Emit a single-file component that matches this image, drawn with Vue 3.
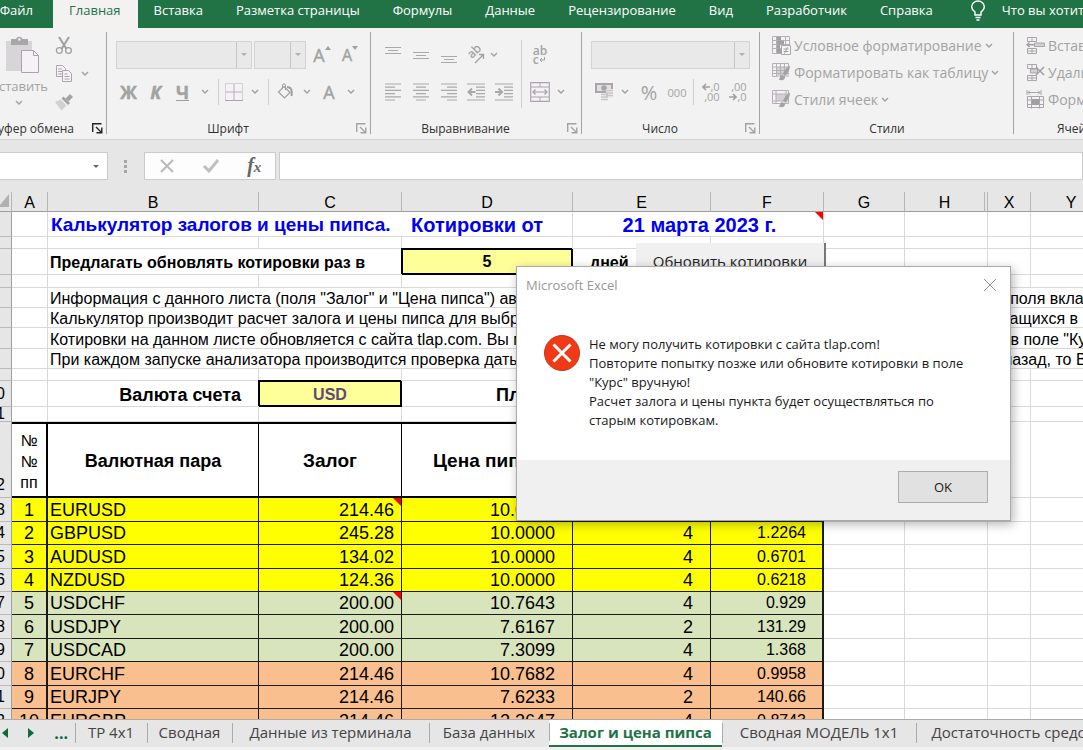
<script setup>
import { ref } from 'vue'

const ribbonTabs = ['Файл', 'Главная', 'Вставка', 'Разметка страницы', 'Формулы', 'Данные', 'Рецензирование', 'Вид', 'Разработчик', 'Справка']
const activeRibbonTab = ref('Главная')

const columns = [
  { name: 'A', width: 36 },
  { name: 'B', width: 211 },
  { name: 'C', width: 143 },
  { name: 'D', width: 171 },
  { name: 'E', width: 138 },
  { name: 'F', width: 113 },
  { name: 'G', width: 81 },
  { name: 'H', width: 80 },
  { name: '', width: 3 },
  { name: 'X', width: 43 },
  { name: 'Y', width: 81 }
]

const notes = [
  { height: 20, start: 'Информация с данного листа (поля "Залог" и "Цена пипса") автоматически', end: 'ет поля вкладки' },
  { height: 20, start: 'Калькулятор производит расчет залога и цены пипса для выбранных', end: 'ржащихся в поле' },
  { height: 21, start: 'Котировки на данном листе обновляется с сайта tlap.com. Вы можете', end: 'те в поле "Курс"' },
  { height: 20, start: 'При каждом запуске анализатора производится проверка даты обновления', end: 'й назад, то Вам' }
]

const pairs = [
  { row: 13, n: 1, pair: 'EURUSD', margin: '214.46', pip: '10.0000', digits: 4, rate: '1.0723', tone: 'yellow', height: 24, mark: true },
  { row: 14, n: 2, pair: 'GBPUSD', margin: '245.28', pip: '10.0000', digits: 4, rate: '1.2264', tone: 'yellow', height: 23 },
  { row: 15, n: 3, pair: 'AUDUSD', margin: '134.02', pip: '10.0000', digits: 4, rate: '0.6701', tone: 'yellow', height: 24 },
  { row: 16, n: 4, pair: 'NZDUSD', margin: '124.36', pip: '10.0000', digits: 4, rate: '0.6218', tone: 'yellow', height: 23 },
  { row: 17, n: 5, pair: 'USDCHF', margin: '200.00', pip: '10.7643', digits: 4, rate: '0.929', tone: 'green', height: 23, mark: true },
  { row: 18, n: 6, pair: 'USDJPY', margin: '200.00', pip: '7.6167', digits: 2, rate: '131.29', tone: 'green', height: 24 },
  { row: 19, n: 7, pair: 'USDCAD', margin: '200.00', pip: '7.3099', digits: 4, rate: '1.368', tone: 'green', height: 23 },
  { row: 20, n: 8, pair: 'EURCHF', margin: '214.46', pip: '10.7682', digits: 4, rate: '0.9958', tone: 'orange', height: 24 },
  { row: 21, n: 9, pair: 'EURJPY', margin: '214.46', pip: '7.6233', digits: 2, rate: '140.66', tone: 'orange', height: 23 },
  { row: 22, n: 10, pair: 'EURGBP', margin: '214.46', pip: '12.2647', digits: 4, rate: '0.8743', tone: 'orange', height: 24 }
]

const sheets = [
  { name: 'ТР 4х1', width: 72 },
  { name: 'Сводная', width: 85 },
  { name: 'Данные из терминала', width: 197 },
  { name: 'База данных', width: 120 },
  { name: 'Залог и цена пипса', width: 173 },
  { name: 'Сводная МОДЕЛЬ 1х1', width: 194 },
  { name: 'Достаточность средств', width: 200 }
]
const activeSheet = ref('Залог и цена пипса')
const period = ref('5')
</script>

<template>
  <div class="excel">
    <svg class="sprite" aria-hidden="true">
      <symbol id="chev" viewBox="0 0 8 6"><path d="M1 1l3 3 3-3" fill="none" stroke="#a0a0a0" stroke-width="1.4" /></symbol>
      <symbol id="launch" viewBox="0 0 11 11"><path d="M.7 9V.7H9.5M4 4l5 5M9.8 4.500v5.300H4.500" fill="none" stroke="currentColor" stroke-width="1.400" /></symbol>
      <symbol id="brush" viewBox="0 0 12 16"><path d="M11.500 0C8 2 5.500 5 4.500 8.500l2 1.500C9.500 8 11.500 4 11.500 0z" fill="#a3a3a3" /><path d="M3.800 9.500C1.500 10 2 12.500 0 14c3 1.500 6.500 1 6.500-2.500z" fill="#a3a3a3" /></symbol>
    </svg>

    <nav class="tabs" aria-label="Лента">
      <button v-for="t in ribbonTabs" :key="t" class="tab" :class="{ active: t === activeRibbonTab, file: t === 'Файл' }" @click="activeRibbonTab = t"><span>{{ t }}</span></button>
      <button class="tab tell">
        <svg width="16" height="22" viewBox="0 0 16 22" fill="none" stroke="#fff" stroke-width="1.4"><path d="M5 15v-3C3 10.500 1.700 9 1.700 6.700 1.700 3.500 4.500 1 8 1s6.300 2.500 6.300 5.700C14.300 9 13 10.500 11 12v3zM5.500 17.500h5M6.500 20h3" /></svg>
        <span>Что вы хотите сделать?</span>
      </button>
    </nav>

    <div class="ribbon">
      <section class="group clipboard">
        <div class="clip-body">
          <button class="paste">
            <svg width="34" height="38" viewBox="0 0 34 38"><path d="M0 5h26v30H0z" fill="#d8d5d8" /><path d="M5 3h5a3.500 3.500 0 0 1 6.500 0H22v6H5z" fill="#a9a6a9" /><circle cx="13.300" cy="3.500" r="1.300" fill="#f1f1f1" /><path d="M15.500 14.500h12l5 5v17h-17z" fill="#f5f1f7" stroke="#a9a6a9" /><path d="M27.500 14.500v5h5" fill="none" stroke="#a9a6a9" /></svg>
            <span class="paste-label"><span>Вставить</span></span>
            <svg class="chev"><use href="#chev" /></svg>
          </button>
          <div class="clip-tools">
            <button aria-label="Вырезать"><svg width="18" height="19" viewBox="0 0 18 19" fill="none" stroke="#a0a0a0"><path d="M4 1l7.500 12M14 1L6.500 13" stroke-width="2" /><circle cx="4.300" cy="14.500" r="2.900" stroke-width="1.300" /><circle cx="13.500" cy="14.500" r="2.900" stroke-width="1.300" /></svg></button>
            <button aria-label="Копировать"><svg width="18" height="19" viewBox="0 0 18 19" fill="#f5f1f7" stroke="#a9a6a9"><path d="M1.500 1.500h6l3 3v8h-9z" /><path d="M3 5h4M3 7.500h5M3 10h4" /><path d="M7.500 6.500h6l3 3v8h-9z" /><path d="M9.500 10h3M9.500 12.500h5M9.500 15h5" /></svg></button>
            <svg class="chev"><use href="#chev" /></svg>
            <button aria-label="Формат по образцу"><svg width="18" height="18" viewBox="0 0 18 18"><path d="M15 1l3 3-4.500 4.500-3-3z" fill="#a3a3a3" /><path d="M8.500 3.500l6.500 6.500-2 2L6.500 5.500z" fill="#a3a3a3" /><path d="M5.500 6.500l6 6-5 5L0 9z" fill="#d3d0d3" /></svg></button>
          </div>
        </div>
        <footer class="caption"><span>Буфер обмена</span><button class="launch dark" aria-label="Параметры буфера обмена"><svg width="11" height="11"><use href="#launch" /></svg></button></footer>
      </section>

      <section class="group font">
        <div class="font-top">
          <span class="combo"><select aria-label="Шрифт" disabled></select><i></i></span>
          <span class="combo"><select aria-label="Размер шрифта" disabled></select><i></i></span>
          <button class="glyph" aria-label="Увеличить размер шрифта">A<svg width="6" height="4" viewBox="0 0 6 4"><path d="M0 4l3-4 3 4z" fill="#a0a0a0" /></svg></button>
          <button class="glyph small" aria-label="Уменьшить размер шрифта">A<svg width="6" height="4" viewBox="0 0 6 4"><path d="M0 0l3 4 3-4z" fill="#a0a0a0" /></svg></button>
        </div>
        <div class="font-bottom">
          <button class="glyph bold">Ж</button>
          <button class="glyph bold italic">К</button>
          <button class="glyph bold underline">Ч</button>
          <svg class="chev"><use href="#chev" /></svg>
          <i class="rule"></i>
          <button aria-label="Границы"><svg width="18" height="18" viewBox="0 0 18 18" fill="none"><path d="M.5.5h17v17H.5z" fill="#f5f1f7" stroke="#b5b0b5" stroke-dasharray="1 1" /><path d="M9 1v16M1 9h16" stroke="#b5b0b5" /><path d="M0 17.500h18" stroke="#a9a6a9" /></svg></button>
          <svg class="chev"><use href="#chev" /></svg>
          <i class="rule"></i>
          <button aria-label="Цвет заливки"><svg width="18" height="18" viewBox="0 0 18 18" fill="none" stroke="#a0a0a0"><path d="M7 3.500l6 6-5.500 5.500-6-6z" fill="#f5f1f7" stroke-width="1.200" /><path d="M5.500 5V2c0-1.500 3-1.500 3 0v5" /><path d="M10 4c4 0 5.500 3 4.500 9" stroke-width="2" /></svg></button>
          <svg class="chev"><use href="#chev" /></svg>
          <button class="glyph" aria-label="Цвет шрифта">A</button>
          <svg class="chev"><use href="#chev" /></svg>
        </div>
        <footer class="caption"><span>Шрифт</span><button class="launch" aria-label="Параметры шрифта"><svg width="11" height="11"><use href="#launch" /></svg></button></footer>
      </section>

      <section class="group align">
        <div class="align-body">
          <button aria-label="По верхнему краю"><svg class="lines" viewBox="0 0 18 18"><path d="M1 1.500h16M4 4.500h10M1 7.500h16" /></svg></button>
          <button aria-label="По середине"><svg class="lines" viewBox="0 0 18 18"><path d="M1 6.500h16M4 9.500h10M1 12.500h16" /></svg></button>
          <button aria-label="По нижнему краю"><svg class="lines" viewBox="0 0 18 18"><path d="M1 10.500h16M4 13.500h10M1 16.500h16" /></svg></button>
          <button aria-label="Ориентация"><svg width="18" height="18" viewBox="0 0 18 18"><text x="0" y="0" transform="translate(5 13) rotate(-45)" font-size="12" fill="#a0a0a0" stroke="#a0a0a0" stroke-width=".3">ab</text><path d="M8 17l8-8M12 8.500h4.500V13" fill="none" stroke="#a0a0a0" stroke-width="1.300" /></svg></button>
          <svg class="chev start"><use href="#chev" /></svg>
          <i class="rule tall"></i>
          <button aria-label="Перенести текст" class="wrap"><span>ab</span><span>c<svg width="6" height="6" viewBox="0 0 6 6" fill="none" stroke="#a0a0a0"><path d="M5.500 0v3H1M3 1L1 3l2 2" /></svg></span></button>
          <span></span>
          <button aria-label="По левому краю"><svg class="lines" viewBox="0 0 18 18"><path d="M1 1h16M1 4.200h10M1 7.400h16M1 10.600h10M1 13.800h16M1 17h10" /></svg></button>
          <button aria-label="По центру"><svg class="lines" viewBox="0 0 18 18"><path d="M1 1h16M4 4.200h10M1 7.400h16M4 10.600h10M1 13.800h16M4 17h10" /></svg></button>
          <button aria-label="По правому краю"><svg class="lines" viewBox="0 0 18 18"><path d="M1 1h16M7 4.200h10M1 7.400h16M7 10.600h10M1 13.800h16M7 17h10" /></svg></button>
          <button aria-label="Уменьшить отступ"><svg class="lines" viewBox="0 0 18 18"><path d="M0 1h18M9 4.200h9M9 7.400h9M9 10.600h9M9 13.800h9M0 17h18" /><path d="M8.500 9H1.500M5 5.500L1.500 9 5 12.500" stroke-width="2" /></svg></button>
          <button aria-label="Увеличить отступ"><svg class="lines" viewBox="0 0 18 18"><path d="M0 1h18M9 4.200h9M9 7.400h9M9 10.600h9M9 13.800h9M0 17h18" /><path d="M0 9h6.500M3.500 5.500L7 9l-3.500 3.500" stroke-width="2" /></svg></button>
          <button aria-label="Объединить ячейки"><svg width="20" height="20" viewBox="0 0 20 20" fill="none" stroke="#a9a6a9"><path d="M.7.7h18.600v18.600H.7z" fill="#f5f1f7" stroke-width="1.200" /><path d="M1 5h18M1 15h18M10 1v4M10 15v4" /><path d="M3 10h14M5.500 7.500L3 10l2.500 2.500M14.500 7.500L17 10l-2.500 2.500" stroke="#a0a0a0" stroke-width="1.200" /></svg></button>
          <svg class="chev"><use href="#chev" /></svg>
        </div>
        <footer class="caption"><span>Выравнивание</span><button class="launch" aria-label="Параметры выравнивания"><svg width="11" height="11"><use href="#launch" /></svg></button></footer>
      </section>

      <section class="group number">
        <div class="number-top"><span class="combo"><select aria-label="Числовой формат" disabled></select><i></i></span></div>
        <div class="number-bottom">
          <button aria-label="Финансовый формат"><svg width="20" height="20" viewBox="0 0 20 20"><path d="M1 1h18v10H1z" fill="#a9a6a9" /><path d="M3 3h14v6H3z" fill="#e2dfe2" /><circle cx="10" cy="6" r="2.800" fill="#a9a6a9" /><path d="M12 7h7v9h-7z" fill="#ece8ee" /><path d="M12 8.500h7M12 11h7M12 13.500h7M7 12.500h7M7 15h7M7 17.500h7" stroke="#c9c5c9" stroke-width="1.300" /></svg></button>
          <svg class="chev"><use href="#chev" /></svg>
          <button class="percent">%</button>
          <button class="zeros">000</button>
          <i class="rule"></i>
          <button class="decimals" aria-label="Увеличить разрядность"><span><svg width="8" height="8" viewBox="0 0 8 8"><path d="M8 4H1.500M4 1L1 4l3 3" /></svg>,0</span><span>,00</span></button>
          <button class="decimals" aria-label="Уменьшить разрядность"><span>,00</span><span><svg width="8" height="8" viewBox="0 0 8 8"><path d="M0 4h6.500M4 1l3 3-3 3" /></svg>,0</span></button>
        </div>
        <footer class="caption"><span>Число</span><button class="launch" aria-label="Параметры числа"><svg width="11" height="11"><use href="#launch" /></svg></button></footer>
      </section>

      <section class="group styles">
        <div class="list">
          <button><svg width="19" height="19" viewBox="0 0 19 19"><path d="M.5.500h17v17H.5z" fill="#f5f1f7" stroke="#b5b0b5" /><path d="M1 4.500h16M1 8.500h16M1 12.500h16M4.500 1v16M13.500 1v16" stroke="#b5b0b5" /><path d="M5 1h4v3.500H5zM5 5h7v3.500H5zM5 9h3v3.500H5zM5 13h4v4H5z" fill="#a3a0a3" /><path d="M9.500 9.500h9v9h-9z" fill="#f8f5f9" stroke="#a9a6a9" /><path d="M11.500 13h5M11.500 15.500h5M15.500 11l-3 6.500" stroke="#a0a0a0" /></svg>Условное форматирование<svg class="chev"><use href="#chev" /></svg></button>
          <button><svg width="19" height="19" viewBox="0 0 19 19"><path d="M.5.500h16v13H.5z" fill="#f5f1f7" stroke="#b5b0b5" /><path d="M5 4h12v10H5z" fill="#d3d0d3" /><path d="M1 4h16M1 7.500h16M1 10.500h16M4.500 1v13M8.500 1v13M12.500 1v13" stroke="#b5b0b5" /><use href="#brush" x="6" y="2.500" width="13" height="16" /></svg>Форматировать как таблицу<svg class="chev"><use href="#chev" /></svg></button>
          <button><svg width="19" height="19" viewBox="0 0 19 19"><path d="M.5.500h16v13H.5z" fill="#f5f1f7" stroke="#b5b0b5" /><path d="M4 4h10v7H4z" fill="#d3d0d3" /><path d="M1 4h16M1 11h16M4 1v13M14 1v13" stroke="#b5b0b5" /><use href="#brush" x="6" y="2.500" width="13" height="16" /></svg>Стили ячеек<svg class="chev"><use href="#chev" /></svg></button>
        </div>
        <footer class="caption"><span>Стили</span></footer>
      </section>

      <section class="group cells">
        <div class="list">
          <button><svg width="19" height="19" viewBox="0 0 19 19" fill="#f5f1f7" stroke="#a9a6a9"><path d="M1.500 1.500h9v4h-9zM6 1.500v4M1.500 12.500h9v5h-9zM6 12.500v5M1.500 15h9" /><path d="M8.500 7h10v3.500h-10z" fill="#d3d0d3" /><path d="M8 8.700H1M3.500 6.500L1 8.700 3.500 11" fill="none" stroke="#a0a0a0" stroke-width="1.400" /></svg>Вставить</button>
          <button><svg width="19" height="19" viewBox="0 0 19 19" fill="#f5f1f7" stroke="#a9a6a9"><path d="M1.500 1.500h9v4h-9zM6 1.500v4M1.500 12.500h9v5h-9zM6 12.500v5M1.500 15h9" /><path d="M4.500 6h7v4h-7z" fill="#d3d0d3" /><path d="M10 4l8 8M18 4l-8 8" stroke="#a0a0a0" stroke-width="1.500" /></svg>Удалить</button>
          <button><svg width="19" height="19" viewBox="0 0 19 19" fill="#f5f1f7" stroke="#a9a6a9"><path d="M1 0v5M15 0v5M2 2.500h12M4 .500l-2 2 2 2M12 .500l2 2-2 2" /><path d="M1.500 6.500h16v11h-16zM5.500 6.500v12M13.500 6.500v12M1.500 10h16M1.500 14.500h16" /><path d="M6 9h7v6H6z" fill="#a0a0a0" stroke="none" /></svg>Формат</button>
        </div>
        <footer class="caption"><span>Ячейки</span></footer>
      </section>
    </div>

    <div class="formula-bar">
      <span class="name-box"><input type="text" aria-label="Имя ячейки" /><i></i></span>
      <svg class="dots" width="3" height="13" viewBox="0 0 3 13" fill="#a6a6a6"><path d="M0 0h3v3H0zM0 5h3v3H0zM0 10h3v3H0z" /></svg>
      <div class="formula-tools">
        <button aria-label="Отмена"><svg width="16" height="14" viewBox="0 0 16 14" fill="none" stroke="#b9b9b9" stroke-width="2"><path d="M2 1l12 12M14 1L2 13" /></svg></button>
        <button aria-label="Ввод"><svg width="18" height="14" viewBox="0 0 18 14" fill="none" stroke="#c0c0c0" stroke-width="3"><path d="M2 7l5 5L16 1" /></svg></button>
        <button class="fx" aria-label="Вставить функцию">f<small>x</small></button>
      </div>
      <input class="formula" type="text" aria-label="Строка формул" />
    </div>

    <main class="sheet">
      <table>
        <colgroup><col class="rowhead-col" /><col v-for="c in columns" :key="c.name" :style="{ width: c.width + 'px' }" /><col /></colgroup>
        <thead>
          <tr>
            <th class="corner"><svg width="9" height="13" viewBox="0 0 9 13"><path d="M9 0v13H0V11z" fill="#b1b1b1" /></svg></th>
            <th v-for="c in columns" :key="c.name" scope="col">{{ c.name }}</th>
            <th></th>
          </tr>
        </thead>
        <tbody>
          <tr class="r25">
            <th></th><td></td>
            <td colspan="2" class="title open">Калькулятор залогов и цены пипса.</td>
            <td class="title quotes">Котировки от</td>
            <td colspan="2" class="title date marked">21 марта 2023 г.</td>
            <td v-for="i in 6" :key="i"></td>
          </tr>
          <tr class="r12"><th></th><td v-for="i in 12" :key="i"></td></tr>
          <tr class="r26">
            <th></th><td></td>
            <td colspan="2" class="strong open"><label for="period">Предлагать обновлять котировки раз в</label></td>
            <td class="entry"><input id="period" v-model="period" type="text" /></td>
            <td class="strong days open">дней</td><td></td>
            <td v-for="i in 6" :key="i"></td>
          </tr>
          <tr class="r13"><th></th><td v-for="i in 12" :key="i"></td></tr>
          <tr v-for="n in notes" :key="n.start" :style="{ height: n.height + 'px' }">
            <th></th><td></td>
            <td colspan="8" class="note open">{{ n.start }}</td>
            <td colspan="3" class="note open">{{ n.end }}</td>
          </tr>
          <tr class="r12"><th></th><td v-for="i in 12" :key="i"></td></tr>
          <tr class="r26">
            <th><span class="num">10</span></th><td></td>
            <td class="account">Валюта счета</td>
            <td class="entry currency">USD</td>
            <td class="leverage open">Плечо</td><td></td><td></td>
            <td v-for="i in 6" :key="i"></td>
          </tr>
          <tr class="r15"><th><span class="num">11</span></th><td v-for="i in 12" :key="i"></td></tr>
          <tr class="head">
            <th class="low"><span class="num">12</span></th>
            <td class="n">№<br />№<br />пп</td><td class="pair-head">Валютная пара</td><td>Залог</td><td>Цена пипса</td><td>Знаков</td><td class="last">Курс</td>
            <td v-for="i in 6" :key="i" class="plain"></td>
          </tr>
          <tr v-for="p in pairs" :key="p.row" class="data" :class="p.tone" :style="{ height: p.height + 'px' }">
            <th><span class="num">{{ p.row }}</span></th>
            <td class="n">{{ p.n }}</td><td class="pair">{{ p.pair }}</td><td class="margin" :class="{ marked: p.mark }">{{ p.margin }}</td><td>{{ p.pip }}</td><td>{{ p.digits }}</td><td class="last">{{ p.rate }}</td>
            <td v-for="i in 6" :key="i" class="plain"></td>
          </tr>
        </tbody>
      </table>
      <button class="refresh">Обновить котировки</button>
    </main>

    <nav class="sheets" aria-label="Листы">
      <div class="scroll">
        <button aria-label="Предыдущий лист"><svg width="6" height="10" viewBox="0 0 6 10"><path d="M6 0v10L0 5z" fill="#0b6b3a" /></svg></button>
        <button aria-label="Следующий лист"><svg width="6" height="10" viewBox="0 0 6 10"><path d="M0 0v10l6-5z" fill="#0b6b3a" /></svg></button>
        <button class="more">...</button>
      </div>
      <button v-for="s in sheets" :key="s.name" class="sheet-tab" :class="{ active: s.name === activeSheet }" :style="{ width: s.width + 'px' }" @click="activeSheet = s.name">{{ s.name }}</button>
    </nav>

    <div class="message" role="alertdialog" aria-labelledby="message-title" aria-describedby="message-text">
      <header><span id="message-title">Microsoft Excel</span><button aria-label="Закрыть"><svg width="14" height="14" viewBox="0 0 14 14" fill="none" stroke="#999"><path d="M1 1l12 12M13 1L1 13" /></svg></button></header>
      <div class="message-body">
        <svg width="36" height="36" viewBox="0 0 36 36"><circle cx="18" cy="18" r="17.500" fill="#f03a17" stroke="#c2371c" /><path d="M9.500 9.500l17 17M26.500 9.500l-17 17" stroke="#fff" stroke-width="3" /></svg>
        <p id="message-text">Не могу получить котировки с сайта tlap.com!<br />Повторите попытку позже или обновите котировки в поле<br />"Курс" вручную!<br />Расчет залога и цены пункта будет осуществляться по<br />старым котировкам.</p>
      </div>
      <footer><button>OK</button></footer>
    </div>
  </div>
</template>

<style>
body { margin: 0; overflow: hidden; }
</style>

<style scoped>
* { box-sizing: border-box; }
.excel { position: relative; display: flex; flex-direction: column; height: 100vh; overflow: hidden; background: #e6e6e6; font-family: "Open Sans", "Noto Sans", sans-serif; font-size: 14px; color: #262626; }
button { margin: 0; padding: 0; border: 0; background: none; font: inherit; color: inherit; white-space: nowrap; }
svg { display: block; flex: none; }
.sprite { position: absolute; width: 0; height: 0; }
.chev { width: 8px; height: 6px; }

.tabs { display: flex; flex: none; height: 28px; overflow: hidden; background: #217346; }
.tab { flex: none; padding: 0 17px 8px 16px; color: #fff; font-size: 13px; line-height: 20px; }
.tab.file { display: flex; justify-content: flex-end; width: 53px; padding: 0 20px 8px 0; overflow: hidden; }
.tab.active { background: #f3f2f1; color: #217346; }
.tab.tell { display: flex; gap: 16px; padding-left: 20px; }

.ribbon { display: flex; flex: none; height: 112px; overflow: hidden; background: #f2f2f2; border-bottom: 1px solid #d2d2d2; color: #a3a3a3; }
.group { position: relative; display: flex; flex: none; flex-direction: column; padding-top: 13px; }
.group::after { content: ""; position: absolute; top: 4px; right: 0; bottom: 5px; width: 1px; background: #a3a3a3; }
.group button { display: grid; place-items: center; }
.clipboard { width: 107px; padding-top: 8px; }
.font { width: 264px; }
.align { width: 211px; }
.number { width: 178px; }
.styles { width: 254px; padding-top: 4px; }
.cells { width: 129px; padding-top: 4px; }
.caption { display: flex; justify-content: center; margin-top: auto; color: #333; font-size: 12px; line-height: 20px; }
.caption:has(.launch) { padding-right: 22px; }
.group .launch { position: absolute; right: 4px; bottom: 5px; color: #a3a3a3; }
.group .launch.dark { color: #222; }
.clipboard .caption { justify-content: flex-end; width: 74px; padding-right: 0; overflow: hidden; white-space: nowrap; }

.clip-body { display: flex; gap: 7px; }
.group .paste { width: 48px; height: 76px; justify-items: end; grid-template-rows: 38px 24px 10px; padding-right: 8px; }
.paste .chev { margin-right: 17px; }
.paste-label { display: flex; justify-content: flex-end; width: 48px; margin-right: -8px; overflow: hidden; font-size: 13px; }
.clip-tools { display: grid; grid-template: repeat(3, 19px) / 18px 24px; gap: 9px 0; place-items: center; }
.clip-tools button:first-child { grid-column: 1 / 3; justify-self: start; }

.font-top { display: grid; grid-template-columns: 136px 52px 28px 24px; column-gap: 2px; height: 28px; margin-left: 9px; }
.font-bottom { display: grid; grid-template-columns: 27px 27px 27px 18px 8px 24px 18px 8px 28px 14px 30px 14px; place-items: center; height: 28px; margin: 9px 0 0 8px; }
.combo { position: relative; display: block; height: 28px; }
.combo select { display: block; width: 100%; height: 100%; border: 1px solid #c6c6c6; border-radius: 0; background: #e6e6e6; appearance: none; }
.combo i { position: absolute; top: 1px; right: 1px; bottom: 1px; width: 15px; border-left: 1px solid #c6c6c6; }
.combo i::after { content: ""; position: absolute; top: 11px; left: 4px; border: 3px solid transparent; border-top-color: #b0b0b0; }
.glyph { font-size: 18px; line-height: 28px; -webkit-text-stroke: 0.4px #a0a0a0; }
.group .font-top .glyph { display: flex; justify-content: center; align-items: center; }
.font-top .glyph svg { margin-bottom: 14px; }
.group .small { font-size: 16px; }
.bold { font-weight: 700; }
.italic { font-style: italic; }
.underline { text-decoration: underline; }
.rule { width: 1px; height: 26px; background: #d0d0d0; }
.tall { grid-row: 1 / 3; grid-column: 6; height: 68px; }
.align-body { display: grid; grid-template: 28px 28px / 28px 28px 27px 28px 28px 6px 32px 10px; row-gap: 9px; place-items: center; margin-left: 8px; }
.start { justify-self: start; }
.lines { width: 18px; height: 18px; fill: none; stroke: #a9a9a9; stroke-width: 1.2; }
.wrap { font-size: 12px; line-height: 9px; font-weight: 600; }
.wrap span { display: flex; align-items: center; justify-self: start; }
.number-top { padding: 0 10px 0 9px; }
.number-bottom { display: grid; grid-template-columns: 28px 14px 34px 22px 10px 26px 28px; place-items: center; height: 28px; margin: 9px 0 0 8px; }
.percent { font-size: 20px; }
.zeros { font-size: 11px; }
.decimals { font-size: 11px; line-height: 10px; }
.decimals span { display: flex; align-items: center; justify-self: end; }
.decimals svg { fill: none; stroke: #a0a0a0; stroke-width: 1.6; }
.list { display: flex; flex-direction: column; align-items: flex-start; padding-left: 12px; }
.group .list button { display: flex; align-items: center; gap: 3px; height: 27px; }

.formula-bar { display: flex; flex: none; align-items: center; height: 52px; background: #e6e6e6; }
.name-box { position: relative; width: 108px; height: 28px; }
.formula-bar input { display: block; width: 100%; height: 28px; border: 1px solid #cbcbcb; background: #fff; outline: 0; }
.formula-bar .name-box input { border-left: 0; }
.name-box i { position: absolute; top: 13px; right: 9px; border: 3px solid transparent; border-top-color: #666; }
.dots { margin: 0 17px 0 16px; }
.formula-tools { display: flex; justify-content: space-around; align-items: center; width: 132px; height: 28px; margin-right: 3px; border: 1px solid #cbcbcb; background: #fdfdfd; }
.formula-bar .formula { flex: 1; width: auto; }
.fx { font: italic 700 20px/24px "Liberation Serif", serif; color: #666; }
.fx small { font-size: 15px; }

.sheet { position: relative; flex: 1; min-height: 0; overflow: hidden; background: #fff; }
table { width: max(100%, 1113px); table-layout: fixed; border-collapse: separate; border-spacing: 0; font-family: "Liberation Sans", Arial, sans-serif; color: #000; }
.rowhead-col { width: 12px; }
th, td { padding: 0; border: 0 solid #d9d9d9; border-width: 0 1px 1px 0; overflow: hidden; white-space: nowrap; vertical-align: middle; font-size: 16px; line-height: 18px; font-weight: 400; }
thead th { height: 20px; padding-top: 2px; background: #e6e6e6; border-color: #b5b5b5; border-bottom-color: #9f9f9f; line-height: 17px; }
tbody th { background: #e6e6e6; border-right-color: #9f9f9f; border-bottom-color: #b9b9b9; }
.corner { vertical-align: top; }
tbody td:nth-last-child(5) { border-right-width: 0; }
tbody .open { border-right-width: 0; }
.r12 { height: 12px; }
.r13 { height: 13px; }
.r15 { height: 15px; }
.r25 { height: 25px; }
.r26 { height: 26px; }
.num { display: flex; justify-content: flex-end; width: 5px; overflow: hidden; line-height: 14px; }
.low { vertical-align: bottom; padding-bottom: 5px; }
.title { padding: 2px 0 0 3px; font-size: 19px; font-weight: 700; line-height: 22px; color: #0000f5; }
.quotes { padding-left: 9px; font-size: 20px; }
.date { text-align: center; font-size: 20px; }
.marked { position: relative; }
.marked::after { content: ""; position: absolute; top: 0; right: 0; border: 4px solid transparent; border-top-color: #f00; border-right-color: #f00; }
.strong { padding: 2px 0 0 2px; font-size: 16px; font-weight: 700; }
.strong.days { padding-left: 17px; }
.entry { border: 1px solid #000; border-width: 1px 2px 2px 1px; box-shadow: -1px -1px 0 #000; background: #ffff99; }
.entry input { display: block; width: 100%; height: 20px; padding: 0; border: 0; outline: 0; background: none; font: inherit; font-weight: 700; color: #000; text-align: center; }
.note { padding: 2px 0 0 2px; line-height: 17px; }
.account { padding: 2px 17px 0 0; text-align: right; font-size: 18px; font-weight: 700; }
.currency { padding-top: 2px; text-align: center; font-weight: 700; color: #5f497a; }
.leverage { padding: 2px 0 0 94px; font-size: 18px; font-weight: 700; }
.head { height: 76px; }
.head td { padding-top: 2px; border-color: #000; border-top-width: 2px; border-bottom-width: 2px; text-align: center; font-size: 19px; font-weight: 700; }
.head .n { font-size: 16px; font-weight: 400; line-height: 21px; }
.head .pair-head { font-size: 18px; }
.data td { border-color: #1a1a1a; padding-right: 17px; text-align: right; font-size: 18px; }
tr .n.n { padding-right: 0; border-right-width: 2px; text-align: center; }
.data .pair { padding-left: 2px; text-align: left; }
.data .margin { padding-right: 7px; }
.data .last { padding-right: 16px; font-size: 16px; }
tr .last.last { border-right-width: 2px; }
tr .plain.plain { border-color: #d9d9d9; border-top-width: 0; border-bottom-width: 1px; }
.yellow td { background: #ffff00; }
.green td { background: #d8e4bc; }
.orange td { background: #fabf8f; }
tr .plain.plain { background: #fff; }
.refresh { position: absolute; top: 51px; left: 636px; width: 190px; height: 38px; border-right: 2px solid #777; border-bottom: 2px solid #777; background: #f0f0f0; font-size: 15px; color: #222; }

.sheets { display: flex; flex: none; height: 31px; overflow: hidden; border-top: 1px solid #ababab; border-bottom: 3px solid #f1f1f1; background: #e6e6e6; color: #444; }
.scroll { display: flex; flex: none; justify-content: space-between; width: 75px; padding: 0 7px 2px 2px; font-weight: 700; color: #0b6b3a; }
.scroll .more { font-size: 16px; }
.sheet-tab { position: relative; flex: none; padding-bottom: 3px; text-align: center; font-size: 15px; line-height: 20px; }
.sheet-tab::before { content: ""; position: absolute; top: 3px; bottom: 4px; left: 0; width: 1px; background: #ababab; }
.sheet-tab.active { padding-bottom: 1px; border-bottom: 2px solid #217346; background: #fff; font-weight: 700; color: #217346; }

.message { position: absolute; top: 266px; left: 516px; width: 495px; border: 1px solid #a9a9a9; background: #fff; box-shadow: 2px 3px 10px rgba(0, 0, 0, 0.3); font-size: 13px; color: #1a1a1a; }
.message header { display: flex; justify-content: space-between; align-items: center; height: 36px; padding: 0 13px 0 9px; color: #999; }
.message-body { display: flex; gap: 9px; height: 157px; padding: 32px 27px 0; }
.message-body p { margin: 0; line-height: 19px; }
.message footer { display: flex; justify-content: flex-end; align-items: center; height: 60px; padding: 0 22px 6px 0; background: #f0f0f0; }
.message footer button { width: 90px; height: 32px; border: 1px solid #adadad; background: #e1e1e1; }
</style>
